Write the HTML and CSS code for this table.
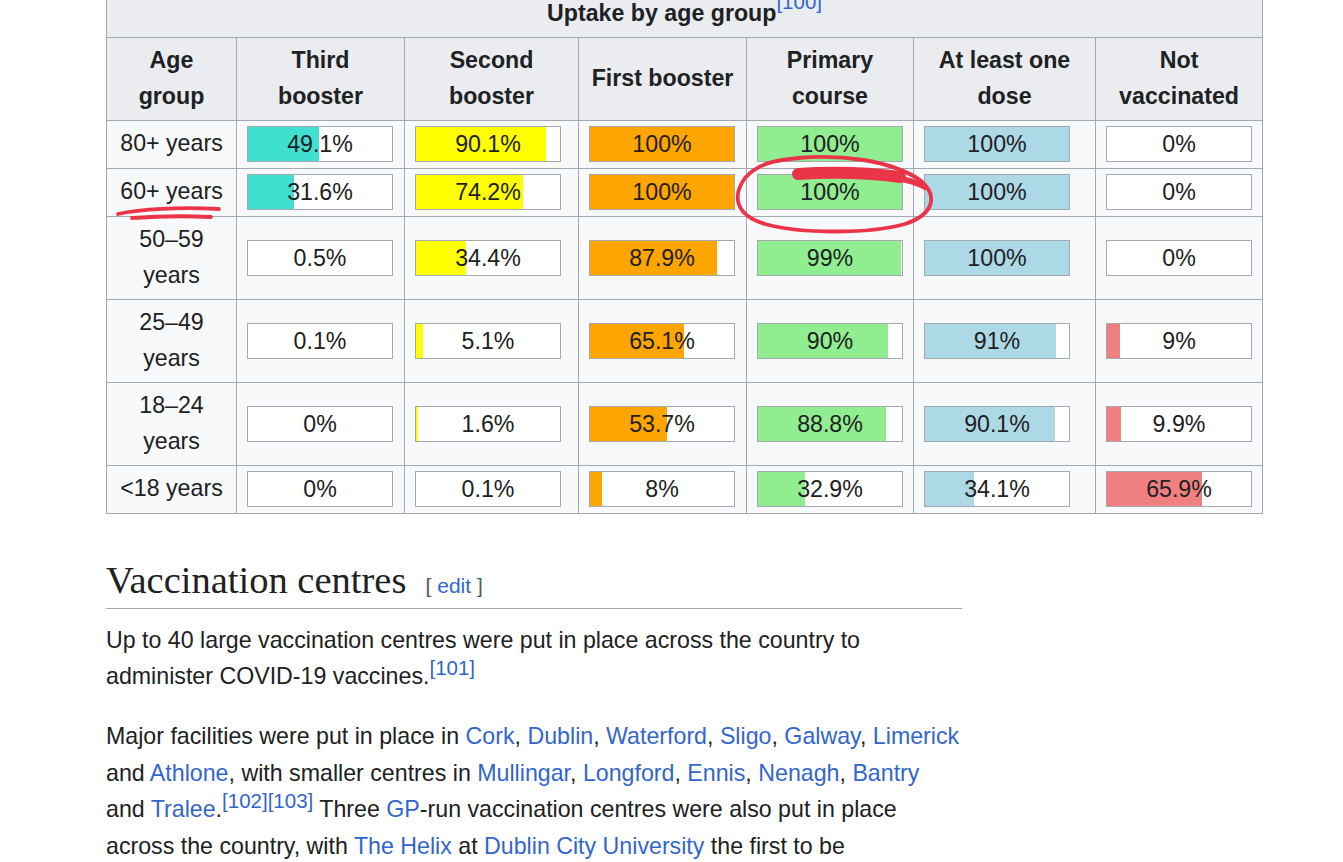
FILE: index.html
```html
<!DOCTYPE html>
<html lang="en">
<head>
<meta charset="utf-8">
<title>Vaccination uptake</title>
<link rel="stylesheet" href="styles.css">
</head>
<body>
<div class="page">
  <table class="uptake">
    <colgroup>
      <col class="w-age"><col class="w-a"><col class="w-b"><col class="w-a"><col class="w-c"><col class="w-d"><col class="w-c">
    </colgroup>
    <tr><th colspan="7" class="cap">Uptake by age group<sup class="ref"><a href="#">[100]</a></sup></th></tr>
    <tr>
      <th>Age<br>group</th><th>Third<br>booster</th><th>Second<br>booster</th><th>First booster</th><th>Primary<br>course</th><th>At least one<br>dose</th><th>Not<br>vaccinated</th>
    </tr>
    <tr>
      <td>80+ years</td>
      <td><div class="bar third" style="--p:49.1%">49.1%</div></td>
      <td><div class="bar second" style="--p:90.1%">90.1%</div></td>
      <td><div class="bar first" style="--p:100%">100%</div></td>
      <td><div class="bar primary" style="--p:100%">100%</div></td>
      <td><div class="bar one" style="--p:100%">100%</div></td>
      <td><div class="bar none" style="--p:0%">0%</div></td>
    </tr>
    <tr>
      <td>60+ years</td>
      <td><div class="bar third" style="--p:31.6%">31.6%</div></td>
      <td><div class="bar second" style="--p:74.2%">74.2%</div></td>
      <td><div class="bar first" style="--p:100%">100%</div></td>
      <td><div class="bar primary" style="--p:100%">100%</div></td>
      <td><div class="bar one" style="--p:100%">100%</div></td>
      <td><div class="bar none" style="--p:0%">0%</div></td>
    </tr>
    <tr>
      <td>50–59 years</td>
      <td><div class="bar third" style="--p:0.2%">0.5%</div></td>
      <td><div class="bar second" style="--p:34.4%">34.4%</div></td>
      <td><div class="bar first" style="--p:87.9%">87.9%</div></td>
      <td><div class="bar primary" style="--p:99%">99%</div></td>
      <td><div class="bar one" style="--p:100%">100%</div></td>
      <td><div class="bar none" style="--p:0%">0%</div></td>
    </tr>
    <tr>
      <td>25–49 years</td>
      <td><div class="bar third" style="--p:0.1%">0.1%</div></td>
      <td><div class="bar second" style="--p:5.1%">5.1%</div></td>
      <td><div class="bar first" style="--p:65.1%">65.1%</div></td>
      <td><div class="bar primary" style="--p:90%">90%</div></td>
      <td><div class="bar one" style="--p:91%">91%</div></td>
      <td><div class="bar none" style="--p:9%">9%</div></td>
    </tr>
    <tr>
      <td>18–24 years</td>
      <td><div class="bar third" style="--p:0%">0%</div></td>
      <td><div class="bar second" style="--p:1.6%">1.6%</div></td>
      <td><div class="bar first" style="--p:53.7%">53.7%</div></td>
      <td><div class="bar primary" style="--p:88.8%">88.8%</div></td>
      <td><div class="bar one" style="--p:90.1%">90.1%</div></td>
      <td><div class="bar none" style="--p:9.9%">9.9%</div></td>
    </tr>
    <tr>
      <td>&lt;18 years</td>
      <td><div class="bar third" style="--p:0%">0%</div></td>
      <td><div class="bar second" style="--p:0.1%">0.1%</div></td>
      <td><div class="bar first" style="--p:8%">8%</div></td>
      <td><div class="bar primary" style="--p:32.9%">32.9%</div></td>
      <td><div class="bar one" style="--p:34.1%">34.1%</div></td>
      <td><div class="bar none" style="--p:65.9%">65.9%</div></td>
    </tr>
  </table>

  <section class="section">
    <h2>Vaccination centres<span class="editsection"><span class="br">[</span><a href="#">edit</a><span class="br">]</span></span></h2>
    <p>Up to 40 large vaccination centres were put in place across the country to administer COVID-19 vaccines.<sup class="ref"><a href="#">[101]</a></sup></p>
    <p>Major facilities were put in place in <a href="#">Cork</a>, <a href="#">Dublin</a>, <a href="#">Waterford</a>, <a href="#">Sligo</a>, <a href="#">Galway</a>, <a href="#">Limerick</a> and <a href="#">Athlone</a>, with smaller centres in <a href="#">Mullingar</a>, <a href="#">Longford</a>, <a href="#">Ennis</a>, <a href="#">Nenagh</a>, <a href="#">Bantry</a> and <a href="#">Tralee</a>.<sup class="ref"><a href="#">[102]</a><a href="#">[103]</a></sup> Three <a href="#">GP</a>-run vaccination centres were also put in place across the country, with <a href="#">The Helix</a> at <a href="#">Dublin City University</a> the first to be</p>
  </section>
</div>

<svg class="ink" width="1343" height="862" viewBox="0 0 1343 862" aria-hidden="true">
  <path d="M118 214 C 140 209, 180 207, 219 209" />
  <path d="M132 218 C 160 216, 190 216, 211 217" />
  <path d="M797 158 C 840 154, 890 160, 920 180 C 938 195, 935 214, 905 224 C 870 234, 800 234, 765 224 C 735 215, 732 196, 745 178 C 756 165, 772 160, 800 158" />
  <path class="thick" d="M798 174 C 830 172, 870 173, 900 177" />
  <path class="mid" d="M880 176 C 900 178, 915 181, 925 187" />
</svg>
</body>
</html>
```
FILE: styles.css
```css
body {
  margin: 0;
  background: #ffffff;
  color: #202122;
  font-family: "Liberation Sans", Arial, sans-serif;
  font-size: 23.2px;
}

.page {
  margin-top: -11px;
  padding-left: 106px;
}

.uptake {
  border-collapse: collapse;
  table-layout: fixed;
  width: 1156px;
  background: #f8f9fa;
  border: 1px solid #a2a9b1;
  line-height: 35.5px;
}

.w-age { width: 130px; }
.w-a { width: 168px; }
.w-b { width: 174px; }
.w-c { width: 167px; }
.w-d { width: 182px; }

.uptake th,
.uptake td {
  border: 1px solid #a2a9b1;
  padding: 5.5px 10px;
  text-align: center;
  vertical-align: middle;
}

.uptake td {
  font-weight: normal;
}

.uptake th {
  background: #eaecf0;
  font-weight: bold;
}

.uptake .cap sup {
  font-weight: normal;
  line-height: 0;
  vertical-align: 12px;
}

.bar {
  box-sizing: border-box;
  width: 146px;
  height: 36px;
  border: 1px solid #a2a9b1;
  background: linear-gradient(to right, var(--c) var(--p), #ffffff var(--p));
  line-height: 34px;
  text-align: center;
}

.third { --c: #40e0d0; }
.second { --c: #ffff00; }
.first { --c: #ffa500; }
.primary { --c: #90ee90; }
.one { --c: #add8e6; }
.none { --c: #f08080; }

a {
  color: #3366cc;
  text-decoration: none;
}

sup.ref {
  font-size: 20.5px;
  line-height: 1;
  vertical-align: 9px;
}

.section {
  width: 856px;
}

h2 {
  font-family: "Liberation Serif", "Times New Roman", serif;
  font-weight: normal;
  font-size: 38.5px;
  line-height: 1.3;
  margin: 41px 0 0;
  padding-bottom: 3px;
  border-bottom: 1px solid #a2a9b1;
}

.editsection {
  font-family: "Liberation Sans", Arial, sans-serif;
  font-size: 21px;
  margin-left: 19px;
  color: #54595d;
}

.editsection a {
  margin: 0 6px;
}

.section p {
  margin: 13px 0 23px;
  line-height: 36.7px;
}

.ink {
  position: absolute;
  top: 0;
  left: 0;
  pointer-events: none;
}

.ink path {
  fill: none;
  stroke: #ec3449;
  stroke-width: 3.8;
  stroke-linecap: round;
  stroke-linejoin: round;
}

.ink path.thick {
  stroke-width: 12;
}

.ink path.mid {
  stroke-width: 6;
}
```
